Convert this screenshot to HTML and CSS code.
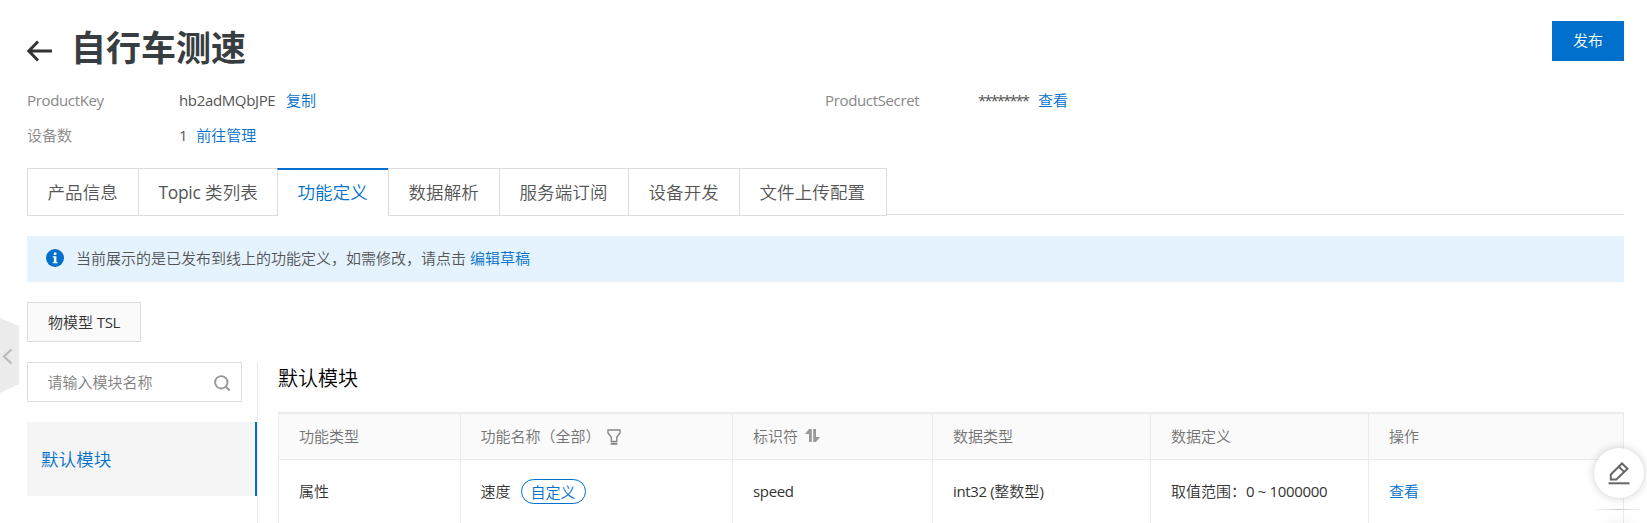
FILE: index.html
```html
<!DOCTYPE html>
<html lang="zh-CN">
<head>
<meta charset="utf-8">
<title>自行车测速</title>
<link rel="stylesheet" href="styles.css">
</head>
<body>
<main class="page">
  <header class="header">
    <svg class="back" width="26" height="22" viewBox="0 0 26 22"><path d="M25 11H2M11 1.5L1.8 11l9.2 9.5" fill="none" stroke="#333" stroke-width="3"/></svg>
    <h1 class="title">自行车测速</h1>
    <button class="publish">发布</button>
  </header>
  <dl class="meta">
    <dt><span class="latin">ProductKey</span></dt><dd><span class="latin key">hb2adMQbJPE</span><a>复制</a></dd>
    <dt><span class="latin">ProductSecret</span></dt><dd><span class="latin stars">********</span><a>查看</a></dd>
    <dt>设备数</dt><dd class="count"><span class="latin">1</span><a>前往管理</a></dd>
  </dl>
  <nav class="tabs">
    <a class="tab">产品信息</a><a class="tab wide"><span class="latin">Topic</span> 类列表</a><a class="tab active">功能定义</a><a class="tab">数据解析</a><a class="tab">服务端订阅</a><a class="tab">设备开发</a><a class="tab last">文件上传配置</a><span class="rule"></span>
  </nav>
  <div class="notice">
    <svg width="18" height="18" viewBox="0 0 18 18"><circle cx="9" cy="9" r="9" fill="#0070cc"/><path d="M7.8 3.6h2.6v2.3H7.8zM6.7 7.3h3.7v5.6h1.1v1.3H6.7v-1.3h1.2V8.6H6.7z" fill="#fff"/></svg>
    <p>当前展示的是已发布到线上的功能定义，如需修改，请点击 <a>编辑草稿</a></p>
  </div>
  <button class="tsl">物模型 <span class="latin">TSL</span></button>
  <div class="content">
    <aside class="side">
      <div class="search"><span>请输入模块名称</span><svg width="17" height="17" viewBox="0 0 17 17" fill="none" stroke="#999" stroke-width="1.9"><circle cx="7.3" cy="7.3" r="6.2"/><path d="M11.7 11.7l4 3.8" stroke-width="2.2"/></svg></div>
      <div class="module">默认模块</div>
    </aside>
    <section class="detail">
      <h2>默认模块</h2>
      <div class="table">
        <div class="row head">
          <div>功能类型</div>
          <div>功能名称（全部）<svg class="filter" width="14" height="16" viewBox="0 0 14 16" fill="none" stroke="#888" stroke-width="1.4"><path d="M1 1h12v3L9.7 8.2v4.3H4.3V8.2L1 4z"/><path d="M3.7 14.8h6.6" stroke-width="2"/></svg></div>
          <div>标识符<svg class="sort" width="15" height="13" viewBox="0 0 15 13" fill="#999"><path d="M4 0h2.8v13H4V5H0zM8.2 0H11v8h4l-4 5H8.2z"/></svg></div>
          <div>数据类型</div><div>数据定义</div><div>操作</div>
        </div>
        <div class="row">
          <div>属性</div><div>速度<span class="tag">自定义</span></div><div><span class="latin">speed</span></div><div><p><span class="latin">int32 (</span>整数型<span class="latin">)</span></p></div><div><p>取值范围：<span class="latin">0 ~ 1000000</span></p></div><div><a>查看</a></div>
        </div>
      </div>
    </section>
  </div>
</main>
<svg class="collapse" width="19" height="75" viewBox="0 0 19 75"><path d="M0 0l19 8v58L0 75z" fill="#ebebeb"/><path d="M11.5 31.5L4 38.5l7.5 7" fill="none" stroke="#bbb" stroke-width="2.3"/></svg>
<div class="float">
  <div class="bubble"><svg width="22" height="23" viewBox="0 0 22 23" fill="none" stroke="#666" stroke-width="2"><path d="M2.8 17.5v-5L14 1.5l5.5 5.2L8.3 17.5zM11 4.8l4.8 4.8"/><path d="M.5 21.3h21"/></svg></div>
  <i class="divider"></i>
  <i class="next"></i>
</div>
</body>
</html>
```
FILE: styles.css
```css
* { box-sizing: border-box; }
body { margin: 0; height: 523px; overflow: hidden; position: relative; background: #fff; color: #333; font: 15px/22px "Open Sans", "Noto Sans CJK SC", sans-serif; font-weight: 350; }
a { color: #0070cc; }
h1, h2, p, dl, dd { margin: 0; }
button { font: inherit; padding: 0; height: 40px; }
.latin { font-weight: 400; letter-spacing: -.35px; }
.page { width: 1624px; height: 523px; overflow: hidden; padding: 21px 0 0 27px; }
.header { display: flex; height: 68px; }
.back { margin-top: 19px; }
.title { margin-left: 18px; flex: 1; font-size: 35px; line-height: 54px; font-weight: 700; color: #373d41; }
.publish { width: 72px; padding-bottom: 2px; background: #0070cc; color: #fff; border: 0; }
.meta { display: grid; grid-template-columns: 152px 646px 153px 1fr; grid-auto-rows: 22px; row-gap: 13px; color: #555; }
.meta dt { color: #888; }
.meta dd { display: flex; gap: 10px; }
.meta .count { gap: 9px; }
.key { width: 97px; }
.stars { width: 50px; letter-spacing: -2px; }
.tabs { display: flex; height: 48px; margin-top: 22px; font-size: 17.5px; line-height: 47px; color: #555; }
.tab { color: #555; border: 1px solid #ddd; border-right: 0; padding: 0 19.5px; white-space: nowrap; width: 111px; letter-spacing: .1px; }
.tab.wide { width: 139px; }
.tab:nth-child(5) { width: 129px; }
.tab.last { width: 148px; border-right: 1px solid #ddd; }
.tab.active { color: #0070cc; border-top: 2px solid #0070cc; border-bottom: 0; line-height: 45px; }
.rule { flex: 1; height: 47px; border-bottom: 1px solid #ddd; }
.notice { display: flex; align-items: center; height: 46px; margin-top: 20px; padding: 0 19px; gap: 12px; background: #e4f3fe; color: #555; }
.notice svg { margin-bottom: 2px; }
.notice p { padding-bottom: 2px; }
.tsl { display: block; width: 114px; margin-top: 20px; background: #fafafa; border: 1px solid #ddd; color: #333; }
.content { display: flex; margin-top: 20px; height: 161px; overflow: hidden; }
.side { width: 231px; border-right: 1px solid #ebebeb; }
.search { display: flex; align-items: center; justify-content: space-between; width: 215px; height: 40px; border: 1px solid #ddd; padding: 0 10px 0 19.5px; color: #808080; }
.search svg { margin-top: 2px; }
.module { margin-top: 20px; height: 74px; padding-left: 14px; background: #f5f5f5; border-right: 2px solid #0070cc; color: #0070cc; font-size: 17.5px; line-height: 74px; letter-spacing: .1px; }
.detail { flex: 1; padding-left: 20px; }
.detail h2 { height: 50px; font-size: 20px; line-height: 34px; font-weight: 350; color: #000; }
.table { border: 1px solid #ebebeb; border-top-width: 2px; }
.row { display: grid; grid-template-columns: 182px 272px 200px 218px 218px 1fr; height: 64px; }
.row > div { display: flex; align-items: center; padding: 0 0 2px 20px; border-right: 1px solid #ebebeb; white-space: nowrap; }
.row > div:nth-child(2) { padding-left: 19.5px; }
.row > div:last-child { border-right: 0; }
.head { height: 46px; background: #fafafa; color: #737373; border-bottom: 1px solid #ebebeb; }
.filter { margin: 2px 0 0 6px; }
.sort { margin-left: 7px; }
.tag { width: 65px; height: 25px; margin-left: 10px; border: 1px solid #0070cc; border-radius: 13px; color: #0070cc; line-height: 24px; text-align: center; }
.collapse { position: absolute; left: 0; top: 318px; }
.float { position: absolute; left: 1594px; top: 448px; width: 50px; height: 75px; }
.bubble { display: flex; align-items: center; justify-content: center; width: 50px; height: 50px; border-radius: 50%; background: #fff; box-shadow: 0 0 10px rgba(0,0,0,.2); }
.divider { display: block; height: 1px; margin: 11px 0 13px; background: linear-gradient(90deg, #fff, #ccc, #fff); }
.next { display: block; width: 26px; height: 1px; margin: 0 auto; background: #ddd; box-shadow: 0 0 8px rgba(0,0,0,.3); }
```
